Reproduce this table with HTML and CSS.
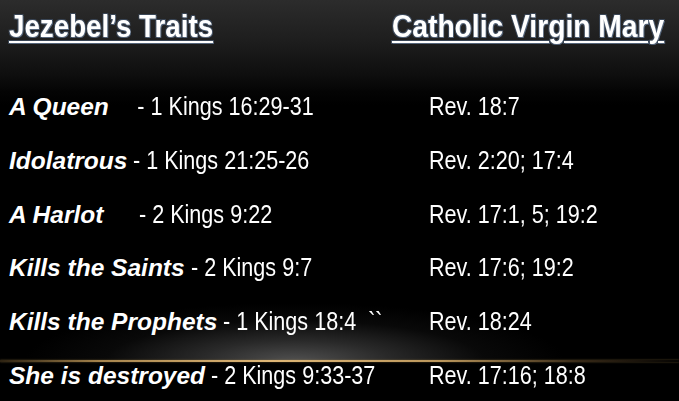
FILE: index.html
```html
<!DOCTYPE html>
<html>
<head>
<meta charset="utf-8">
<link rel="stylesheet" href="styles.css">
</head>
<body>
<div class="slide">
  <div class="glow"></div>
  <div class="goldline"></div>
  <header class="heads">
    <h1 class="head head-left">Jezebel’s Traits</h1>
    <h1 class="head head-right">Catholic Virgin Mary</h1>
  </header>
  <div class="rows">
    <div class="row"><span class="left"><em>A Queen</em><span class="ref">    &#8201;- 1 Kings 16:29-31</span></span><span class="right">Rev. 18:7</span></div>
    <div class="row"><span class="left"><em>Idolatrous</em><span class="ref"> - 1 Kings 21:25-26</span></span><span class="right">Rev. 2:20; 17:4</span></div>
    <div class="row"><span class="left"><em>A Harlot</em><span class="ref">      - 2 Kings 9:22</span></span><span class="right">Rev. 17:1, 5; 19:2</span></div>
    <div class="row"><span class="left"><em>Kills the Saints</em><span class="ref"> - 2 Kings 9:7</span></span><span class="right">Rev. 17:6; 19:2</span></div>
    <div class="row"><span class="left"><em>Kills the Prophets</em><span class="ref"> - 1 Kings 18:4  ``</span></span><span class="right">Rev. 18:24</span></div>
    <div class="row"><span class="left"><em>She is destroyed</em><span class="ref"> - 2 Kings 9:33-37</span></span><span class="right">Rev. 17:16; 18:8</span></div>
  </div>
</div>
</body>
</html>
```

FILE: styles.css
```css
html, body {
  margin: 0;
  padding: 0;
  background: #000;
}
.slide {
  position: relative;
  width: 679px;
  height: 401px;
  overflow: hidden;
  background: linear-gradient(to bottom, #2c2c2c 0px, #1e1e1e 40px, #0e0e0e 75px, #040404 92px, #000 105px);
  color: #fff;
  font-family: "Liberation Sans", Arial, sans-serif;
}
.glow {
  position: absolute;
  left: 0;
  top: 290px;
  width: 679px;
  height: 71px;
  background: radial-gradient(ellipse 270px 58px at 295px 100%, rgba(80,80,80,1) 0%, rgba(55,55,55,0.75) 35%, rgba(25,25,25,0.35) 70%, rgba(0,0,0,0) 100%);
}
.goldline {
  position: absolute;
  left: 0;
  top: 360px;
  width: 679px;
  height: 2px;
  background: linear-gradient(to right, rgba(150,115,60,0.3) 0%, rgba(195,155,90,0.85) 15%, rgba(222,182,118,1) 40%, rgba(205,165,100,0.9) 65%, rgba(140,105,60,0.4) 85%, rgba(60,45,25,0.1) 100%);
  box-shadow: 0 0 2px rgba(200,160,90,0.5);
}
.heads {
  position: relative;
  display: flex;
  justify-content: space-between;
  padding: 8px 15px 0 9px;
  height: 38px;
}
.head {
  margin: 0;
  font-size: 31px;
  font-weight: bold;
  line-height: 38px;
  white-space: nowrap;
  text-decoration: underline;
  text-decoration-thickness: 2px;
  text-underline-offset: 4px;
  text-shadow: 1px 1px 0 #55657a, -1px -1px 0 #3a4656, 1px -1px 0 #3a4656, -1px 1px 0 #3a4656;
}
.head-left {
  transform: scaleX(0.895);
  transform-origin: left center;
}
.head-right {
  transform: scaleX(0.91);
  transform-origin: right center;
}
.rows {
  position: relative;
  display: flex;
  flex-direction: column;
  padding: 45px 0 0 9px;
}
.row {
  display: grid;
  grid-template-columns: 420px 1fr;
  height: 53.8px;
  align-items: start;
  font-size: 26px;
  line-height: 30px;
  white-space: pre;
}
.row em {
  font-style: italic;
  font-weight: bold;
  font-size: 24.5px;
}
.ref, .right {
  display: inline-block;
  transform: scaleX(0.83);
  transform-origin: left center;
}
```
